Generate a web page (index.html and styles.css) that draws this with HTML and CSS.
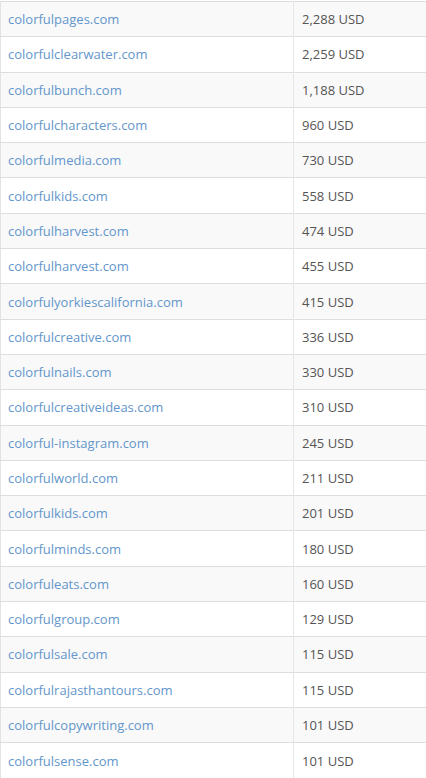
FILE: index.html
```html
<html><head>
  <title>Domain prices</title>
  <link rel="stylesheet" href="styles.css">
</head>
<body>
  <table class="sales">
    <tbody>
      <tr><td><a href="#">colorfulpages.com</a></td><td>2,288 USD</td></tr>
      <tr><td><a href="#">colorfulclearwater.com</a></td><td>2,259 USD</td></tr>
      <tr><td><a href="#">colorfulbunch.com</a></td><td>1,188 USD</td></tr>
      <tr><td><a href="#">colorfulcharacters.com</a></td><td>960 USD</td></tr>
      <tr><td><a href="#">colorfulmedia.com</a></td><td>730 USD</td></tr>
      <tr><td><a href="#">colorfulkids.com</a></td><td>558 USD</td></tr>
      <tr><td><a href="#">colorfulharvest.com</a></td><td>474 USD</td></tr>
      <tr><td><a href="#">colorfulharvest.com</a></td><td>455 USD</td></tr>
      <tr><td><a href="#">colorfulyorkiescalifornia.com</a></td><td>415 USD</td></tr>
      <tr><td><a href="#">colorfulcreative.com</a></td><td>336 USD</td></tr>
      <tr><td><a href="#">colorfulnails.com</a></td><td>330 USD</td></tr>
      <tr><td><a href="#">colorfulcreativeideas.com</a></td><td>310 USD</td></tr>
      <tr><td><a href="#">colorful-instagram.com</a></td><td>245 USD</td></tr>
      <tr><td><a href="#">colorfulworld.com</a></td><td>211 USD</td></tr>
      <tr><td><a href="#">colorfulkids.com</a></td><td>201 USD</td></tr>
      <tr><td><a href="#">colorfulminds.com</a></td><td>180 USD</td></tr>
      <tr><td><a href="#">colorfuleats.com</a></td><td>160 USD</td></tr>
      <tr><td><a href="#">colorfulgroup.com</a></td><td>129 USD</td></tr>
      <tr><td><a href="#">colorfulsale.com</a></td><td>115 USD</td></tr>
      <tr><td><a href="#">colorfulrajasthantours.com</a></td><td>115 USD</td></tr>
      <tr><td><a href="#">colorfulcopywriting.com</a></td><td>101 USD</td></tr>
      <tr><td><a href="#">colorfulsense.com</a></td><td>101 USD</td></tr>
    </tbody>
  </table>
</body></html>
```
FILE: styles.css
```css
body {
  margin: 0;
  padding-top: 1px;
  background: #fff;
  overflow: hidden;
}

.sales {
  width: 440px;
  border-collapse: collapse;
  border-left: 1px solid #e3e3e3;
  font-family: "Open Sans", "Liberation Sans", sans-serif;
  font-size: 13px;
  color: #555;
}

.sales tr {
  height: 35.3px;
  border-top: 1px solid #dedede;
}

.sales tr:nth-child(odd) {
  background-color: #f9f9f9;
}

.sales td {
  padding: 0 8px;
  vertical-align: middle;
}

.sales td:first-child {
  width: 277px;
  padding-left: 7px;
  border-right: 1px solid #e6e6e6;
}

.sales a {
  color: #6396cb;
  text-decoration: none;
}
```
